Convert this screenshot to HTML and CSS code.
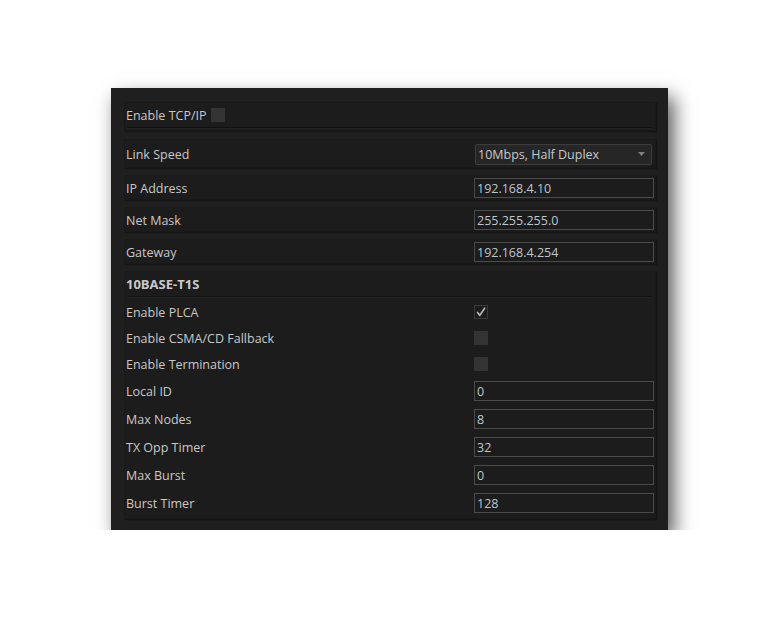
FILE: index.html
```html
<!DOCTYPE html>
<html>
<head>
<meta charset="utf-8">
<title>TCP/IP Settings</title>
<link rel="stylesheet" href="styles.css">
</head>
<body>
<div class="window">
  <section class="box group g-tcp">
    <div class="group-head">
      <span class="label">Enable TCP/IP</span>
      <span class="cb"></span>
    </div>
    <div class="sep"></div>
  </section>

  <div class="box row-box rb-tall">
    <span class="label">Link Speed</span>
    <div class="select">
      <span class="value">10Mbps, Half Duplex</span>
      <svg class="arrow" width="7" height="4" viewBox="0 0 7 4"><path d="M0 0H7L3.5 4Z" fill="#808080"/></svg>
    </div>
  </div>
  <div class="box row-box">
    <span class="label">IP Address</span>
    <div class="input">192.168.4.10</div>
  </div>
  <div class="box row-box">
    <span class="label">Net Mask</span>
    <div class="input">255.255.255.0</div>
  </div>
  <div class="box row-box">
    <span class="label">Gateway</span>
    <div class="input">192.168.4.254</div>
  </div>

  <section class="box group g-t1s">
    <div class="group-head">
      <span class="title">10BASE-T1S</span>
    </div>
    <div class="sep"></div>
    <div class="rows">
      <div class="row cb-row">
        <span class="label">Enable PLCA</span>
        <span class="cb checked"><svg width="12" height="12" viewBox="0 0 12 12"><path d="M2.6 6.4L4.8 9.4L9.6 2.2" fill="none" stroke="#b8b8b8" stroke-width="1.7" stroke-linecap="round" stroke-linejoin="round"/></svg></span>
      </div>
      <div class="row cb-row">
        <span class="label">Enable CSMA/CD Fallback</span>
        <span class="cb"></span>
      </div>
      <div class="row cb-row">
        <span class="label">Enable Termination</span>
        <span class="cb"></span>
      </div>
      <div class="row in-row">
        <span class="label">Local ID</span>
        <div class="input">0</div>
      </div>
      <div class="row in-row">
        <span class="label">Max Nodes</span>
        <div class="input">8</div>
      </div>
      <div class="row in-row">
        <span class="label">TX Opp Timer</span>
        <div class="input">32</div>
      </div>
      <div class="row in-row">
        <span class="label">Max Burst</span>
        <div class="input">0</div>
      </div>
      <div class="row in-row">
        <span class="label">Burst Timer</span>
        <div class="input">128</div>
      </div>
    </div>
  </section>
</div>
</body>
</html>
```

FILE: styles.css
```css
html, body {
  margin: 0;
  padding: 0;
  background: #ffffff;
}

body {
  font-family: "Open Sans", "Noto Sans", sans-serif;
  font-size: 12.5px;
  color: #c8c8c8;
}

.window {
  box-sizing: border-box;
  width: 557px;
  height: 442px;
  margin: 88px 0 0 111px;
  padding: 14px 12px 0 13px;
  background: #1f1f1f;
  display: flex;
  flex-direction: column;
  box-shadow: 6px 9px 18px rgba(0, 0, 0, 0.65);
}

.box {
  box-sizing: border-box;
  background: #1c1c1c;
  border: 1px solid #191919;
  box-shadow: 1px 1px 1px #141414;
}

.label {
  color: #c8c8c8;
  white-space: nowrap;
}

.title {
  font-size: 13px;
  font-weight: 700;
  color: #cacaca;
}

.group {
  display: flex;
  flex-direction: column;
}

.group-head {
  display: flex;
  align-items: center;
  gap: 4px;
  padding-left: 1px;
}

.g-tcp {
  height: 29px;
  margin-bottom: 8px;
}

.g-tcp .group-head {
  height: 24px;
}

.g-t1s {
  height: 248px;
}

.g-t1s .group-head {
  height: 24px;
}

.sep {
  height: 1px;
  margin: 0 3px 0 2px;
  background: #111111;
  box-shadow: 0 1px 0 #242424;
}

.rows {
  padding-top: 2px;
  display: flex;
  flex-direction: column;
}

.row {
  display: grid;
  grid-template-columns: 348px 180px;
  align-items: center;
  padding-left: 1px;
}

.cb-row {
  height: 26px;
}

.in-row {
  height: 28px;
}

.row-box {
  display: grid;
  grid-template-columns: 348px 180px;
  align-items: center;
  padding-left: 1px;
  padding-top: 1px;
  height: 25px;
  margin-bottom: 7px;
}

.rb-tall {
  height: 29px;
}

.cb {
  box-sizing: border-box;
  display: inline-flex;
  align-items: center;
  justify-content: center;
  width: 14px;
  height: 14px;
  background: #333333;
}

.cb.checked {
  background: #1c1c1c;
  border: 1px solid #3a3a3a;
}

.input {
  box-sizing: border-box;
  height: 20px;
  width: 180px;
  padding: 1px 2px 0;
  line-height: 18px;
  background: #1c1c1c;
  border: 1px solid #4a4a4a;
  color: #bfc6cd;
}

.select {
  box-sizing: border-box;
  width: 177px;
  height: 21px;
  margin-left: 1px;
  padding: 0 6px 0 2px;
  display: flex;
  align-items: center;
  justify-content: space-between;
  background: #262626;
  border: 1px solid #3c3c3c;
  border-radius: 2px;
  color: #c8c8c8;
}

.select .value {
  white-space: nowrap;
}
```
